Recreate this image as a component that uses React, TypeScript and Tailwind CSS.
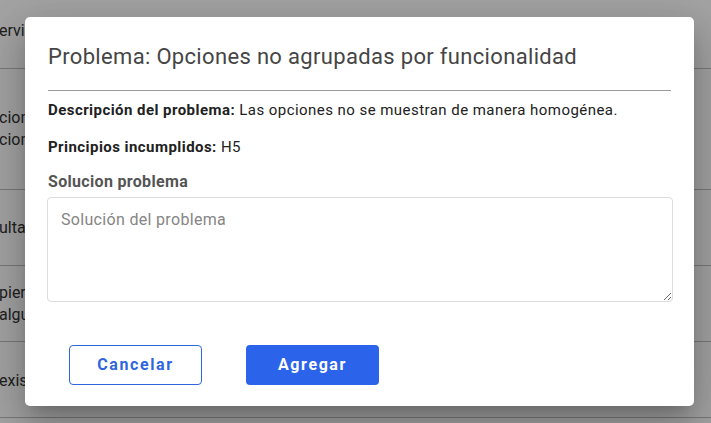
import React from "react";

const rows = [
  { h: "h-[69px]", lines: ["ervicios"], pt: "pt-[20px]" },
  { h: "h-[121px]", lines: ["ciones", "ciones"], pt: "pt-[38px]" },
  { h: "h-[76px]", lines: ["ultar"], pt: "pt-[27px]" },
  { h: "h-[76px]", lines: ["piere", "algun"], pt: "pt-[16px]" },
  { h: "h-[76px]", lines: ["existe"], pt: "pt-[28px]" },
];

function BackgroundList() {
  return (
    <div className="flex flex-col bg-white text-[16px] leading-[22px] text-[#333]">
      {rows.map((r, i) => (
        <div key={i} className={`${r.h} ${r.pt} border-b border-[#bdbdbd]`}>
          {r.lines.map((l, j) => (
            <div key={j} className="-ml-[1px]">
              {l}
            </div>
          ))}
        </div>
      ))}
    </div>
  );
}

export default function App() {
  return (
    <div
      className="relative h-[423px] w-[711px] overflow-hidden"
      style={{ fontFamily: "Roboto, 'Liberation Sans', sans-serif" }}
    >
      <BackgroundList />
      <div className="absolute inset-0 bg-black/[0.36]" />

      <div className="absolute left-[25px] top-[17px] flex h-[389px] w-[669px] flex-col rounded-[5px] bg-white px-[23px] shadow-[0_11px_15px_-7px_rgba(0,0,0,0.2),0_24px_38px_3px_rgba(0,0,0,0.14),0_9px_46px_8px_rgba(0,0,0,0.12)]">
        <h2 className="pt-[24px] text-[22px] leading-[32px] font-normal tracking-[0.015em] text-[#454545]">
          Problema: Opciones no agrupadas por funcionalidad
        </h2>
        <div className="mt-[17px] h-px w-[623px] bg-[#9a9a9a]" />

        <p className="mt-[9px] text-[15px] leading-[20px] tracking-[0.03em] text-[#212121]">
          <span className="font-bold">Descripción del problema:</span> Las opciones no se muestran de manera homogénea.
        </p>
        <p className="mt-[17px] text-[15px] leading-[20px] tracking-[0.03em] text-[#212121]">
          <span className="font-bold">Principios incumplidos:</span> H5
        </p>

        <label className="mt-[15px] text-[16px] leading-[20px] font-bold tracking-[0.02em] text-[#555]">
          Solucion problema
        </label>
        <textarea
          className="mt-[5px] h-[105px] w-[626px] -ml-[1px] rounded-[4px] border border-[#dcdcdc] px-[13px] py-[10px] text-[16px] leading-[24px] tracking-[0.02em] text-[#333] outline-none placeholder:text-[#858585]"
          placeholder="Solución del problema"
        />

        <div className="mt-[43px] flex gap-[44px] pl-[21px]">
          <button className="h-[40px] w-[133px] rounded-[4px] border border-[#2f66e0] bg-white text-[16px] font-bold tracking-[0.1em] text-[#2f66e0]">
            Cancelar
          </button>
          <button className="h-[40px] w-[133px] rounded-[4px] bg-[#2c63eb] text-[16px] font-bold tracking-[0.1em] text-white">
            Agregar
          </button>
        </div>
      </div>
    </div>
  );
}
